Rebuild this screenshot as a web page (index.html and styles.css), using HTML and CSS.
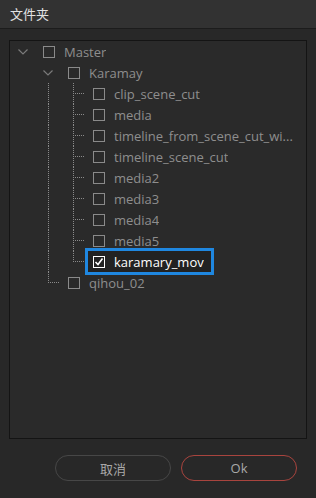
FILE: index.html
```html
<!DOCTYPE html>
<html lang="zh">
<head>
    <meta charset="UTF-8">
    <meta name="viewport" content="width=device-width, initial-scale=1.0">
    <title>文件夹</title>
    <link rel="stylesheet" href="styles.css">
</head>
<body>
    <div class="dialog">
        <div class="titlebar">文件夹</div>
        <div class="content">
            <div class="tree">
                <div class="row">
                    <span class="twist"><svg width="10" height="6" viewBox="0 0 10 6"><polyline points="0.5,0.5 5,5 9.5,0.5" fill="none" stroke="#7a7a7a" stroke-width="1.2"/></svg></span>
                    <span class="item"><span class="box"></span><span class="label">Master</span></span>
                </div>
                <div class="row">
                    <span class="guide"></span>
                    <span class="twist"><svg width="10" height="6" viewBox="0 0 10 6"><polyline points="0.5,0.5 5,5 9.5,0.5" fill="none" stroke="#7a7a7a" stroke-width="1.2"/></svg></span>
                    <span class="item"><span class="box"></span><span class="label">Karamay</span></span>
                </div>
                <div class="row">
                    <span class="guide"></span><span class="guide line"></span><span class="link"></span>
                    <span class="item"><span class="box"></span><span class="label">clip_scene_cut</span></span>
                </div>
                <div class="row">
                    <span class="guide"></span><span class="guide line"></span><span class="link"></span>
                    <span class="item"><span class="box"></span><span class="label">media</span></span>
                </div>
                <div class="row">
                    <span class="guide"></span><span class="guide line"></span><span class="link"></span>
                    <span class="item"><span class="box"></span><span class="label" title="timeline_from_scene_cut_with_audio">timeline_from_scene_cut_wi...</span></span>
                </div>
                <div class="row">
                    <span class="guide"></span><span class="guide line"></span><span class="link"></span>
                    <span class="item"><span class="box"></span><span class="label">timeline_scene_cut</span></span>
                </div>
                <div class="row">
                    <span class="guide"></span><span class="guide line"></span><span class="link"></span>
                    <span class="item"><span class="box"></span><span class="label">media2</span></span>
                </div>
                <div class="row">
                    <span class="guide"></span><span class="guide line"></span><span class="link"></span>
                    <span class="item"><span class="box"></span><span class="label">media3</span></span>
                </div>
                <div class="row">
                    <span class="guide"></span><span class="guide line"></span><span class="link"></span>
                    <span class="item"><span class="box"></span><span class="label">media4</span></span>
                </div>
                <div class="row">
                    <span class="guide"></span><span class="guide line"></span><span class="link"></span>
                    <span class="item"><span class="box"></span><span class="label">media5</span></span>
                </div>
                <div class="row">
                    <span class="guide"></span><span class="guide line"></span><span class="link last"></span>
                    <span class="item selected"><span class="box checked"><svg width="10" height="10" viewBox="0 0 10 10"><polyline points="1.5,5 4,7.5 8.5,1.5" fill="none" stroke="#fff" stroke-width="1.6"/></svg></span><span class="label">karamary_mov</span></span>
                </div>
                <div class="row">
                    <span class="guide"></span><span class="link last"></span>
                    <span class="item"><span class="box"></span><span class="label">qihou_02</span></span>
                </div>
            </div>
        </div>
        <div class="actions">
            <button class="btn">取消</button>
            <button class="btn primary">Ok</button>
        </div>
    </div>
</body>
</html>
```

FILE: styles.css
```css
body {
    margin: 0;
    background-color: #282828;
    font-family: "Open Sans", "Noto Sans CJK SC", sans-serif;
}
.dialog {
    width: 316px;
    height: 498px;
    display: flex;
    flex-direction: column;
    background: #282828;
}
.titlebar {
    height: 28px;
    line-height: 28px;
    padding-left: 10px;
    font-size: 13px;
    color: #e2e2e2;
    background: #323232;
    border-bottom: 1px solid #1c1c1c;
}
.content {
    padding: 11px 9px 0 9px;
}
.tree {
    height: 397px;
    background: #2a2a2a;
    border: 1px solid #141414;
    padding-right: 4px;
    overflow: hidden;
}
.row {
    display: flex;
    align-items: center;
    height: 21px;
    font-size: 13px;
    color: #8e8e8e;
}
.twist,
.guide,
.link {
    flex: 0 0 25px;
    height: 21px;
}
.twist {
    display: flex;
    align-items: center;
    justify-content: center;
}
.guide.line {
    background: repeating-linear-gradient(to bottom, #8a8a8a 0 1px, transparent 1px 2px) no-repeat 13px 0 / 1px 100%;
}
.link {
    background:
        repeating-linear-gradient(to right, #8a8a8a 0 1px, transparent 1px 2px) no-repeat 13px 10px / 12px 1px,
        repeating-linear-gradient(to bottom, #8a8a8a 0 1px, transparent 1px 2px) no-repeat 13px 0 / 1px 100%;
}
.link.last {
    background:
        repeating-linear-gradient(to right, #8a8a8a 0 1px, transparent 1px 2px) no-repeat 13px 10px / 12px 1px,
        repeating-linear-gradient(to bottom, #8a8a8a 0 1px, transparent 1px 2px) no-repeat 13px 0 / 1px 11px;
}
.item {
    display: flex;
    align-items: center;
    height: 21px;
    margin-left: 3px;
    padding: 0 7px 0 5px;
    min-width: 0;
}
.box {
    flex: 0 0 auto;
    width: 10px;
    height: 10px;
    border: 1px solid #8a8a8a;
    margin-right: 9px;
    display: flex;
    align-items: center;
    justify-content: center;
}
.box.checked {
    border-color: #fff;
}
.label {
    white-space: nowrap;
    overflow: hidden;
    text-overflow: ellipsis;
}
.item.selected {
    background: #222;
    outline: 3px solid #1f87e0;
    color: #fff;
}
.actions {
    display: flex;
    justify-content: flex-end;
    gap: 10px;
    padding: 16px 19px 0 0;
}
.btn {
    width: 116px;
    height: 26px;
    border-radius: 13px;
    border: 1px solid #474747;
    background: transparent;
    color: #a8a8a8;
    font-family: "Open Sans", "Noto Sans CJK SC", sans-serif;
    font-size: 13px;
    padding: 0;
}
.btn.primary {
    border: 1.5px solid #a8443e;
}
```
